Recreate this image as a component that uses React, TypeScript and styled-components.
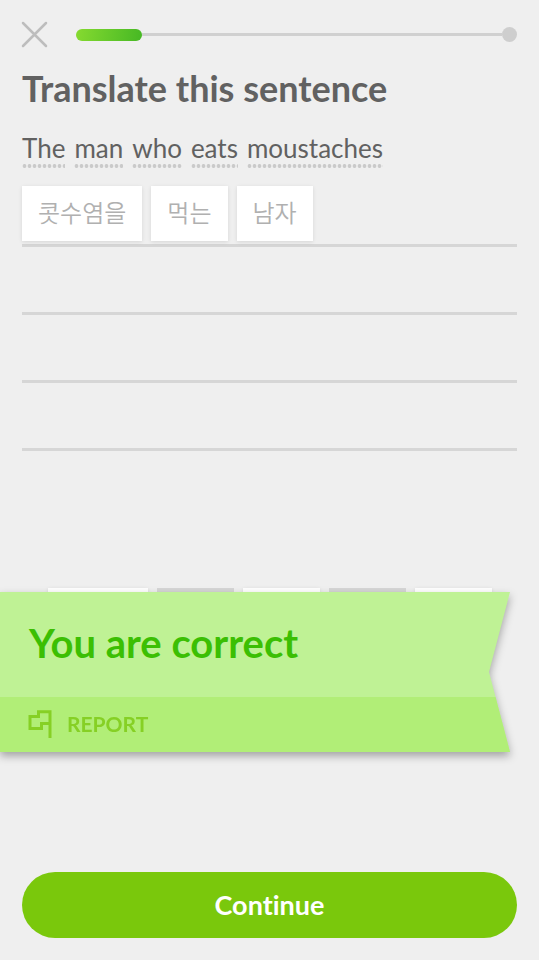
import React from "react";
import styled, { createGlobalStyle } from "styled-components";

const GlobalStyle = createGlobalStyle`
  *, *::before, *::after { box-sizing: border-box; }
  body {
    margin: 0;
    background: #efefef;
    font-family: Lato, "Noto Sans CJK KR", sans-serif;
    font-variant-ligatures: none;
    color: #616161;
  }
  button { font: inherit; font-variant-ligatures: none; border: 0; background: none; padding: 0; cursor: pointer; }
`;

const Page = styled.div`
  min-height: 100vh;
  display: flex;
  flex-direction: column;
  background: #efefef;
`;

const Header = styled.header`
  display: flex;
  align-items: center;
  gap: 28px;
  height: 69px;
  padding: 0 22px 0 21px;
`;

const CloseButton = styled.button`
  display: flex;
  width: 27px;
  height: 27px;
`;

const Progress = styled.div`
  flex: 1;
  display: flex;
  align-items: center;
`;

const ProgressDone = styled.div`
  width: 15%;
  height: 12px;
  border-radius: 6px;
  background: linear-gradient(100deg, #86da30, #46b824);
`;

const ProgressRest = styled.div`
  flex: 1;
  height: 3px;
  background: #d0d0d0;
`;

const ProgressEnd = styled.div`
  width: 15px;
  height: 15px;
  border-radius: 50%;
  background: #cecece;
`;

const Exercise = styled.main`
  flex: 1;
  display: flex;
  flex-direction: column;
`;

const Title = styled.h1`
  margin: 0;
  padding: 0 22px;
  font-size: 36px;
  line-height: 38px;
  font-weight: 700;
`;

const Sentence = styled.p`
  display: flex;
  flex-wrap: wrap;
  gap: 9px;
  margin: 0;
  padding: 24px 22px 11px;
  font-size: 26px;
  line-height: 35px;
`;

const Hint = styled.span`
  height: 37px;
  background: radial-gradient(circle at center, #cacaca 50%, transparent 68%) left bottom / 5px 4px repeat-x;
`;

const AnswerArea = styled.div`
  margin: 0 22px;
`;

const AnswerLine = styled.div`
  display: flex;
  align-items: flex-start;
  gap: 9px;
  height: 68px;
  padding-top: 7px;
  border-bottom: 3px solid #d6d6d6;
`;

const Tile = styled.button`
  height: 55px;
  padding: 0 16px 4px;
  background: #fff;
  color: #b0b0b0;
  font-family: "Noto Sans CJK KR", sans-serif;
  font-size: 24px;
  line-height: 36px;
  font-weight: 350;
  box-shadow: 0 1px 4px rgba(0, 0, 0, 0.1);
`;

const BankArea = styled.section`
  position: relative;
  margin-top: auto;
  padding-bottom: 229px;
`;

const Bank = styled.div`
  display: flex;
  justify-content: center;
  gap: 9px;
`;

const Slot = styled.div<{ $wide?: boolean; $used?: boolean }>`
  width: ${(p) => (p.$wide ? 100 : 77)}px;
  height: 55px;
  background: ${(p) => (p.$used ? "#d6d6d6" : "#fff")};
  box-shadow: ${(p) => (p.$used ? "none" : "0 1px 4px rgba(0, 0, 0, 0.1)")};
`;

const Banner = styled.div`
  position: absolute;
  top: 4px;
  left: 0;
  right: 29px;
  filter: drop-shadow(0 4px 4px rgba(0, 0, 0, 0.32));
`;

const Ribbon = styled.div`
  background: #bff295;
  clip-path: polygon(0 0, 100% 0, calc(100% - 21px) 50%, 100% 100%, 0 100%);
`;

const Verdict = styled.h2`
  margin: 0;
  padding: 27px 29px 30px;
  color: #3bbf03;
  font-size: 40px;
  line-height: 48px;
  font-weight: 700;
`;

const ReportButton = styled.button`
  display: flex;
  align-items: center;
  gap: 15px;
  width: 100%;
  height: 55px;
  padding: 0 28px 2px;
  background: #b1ee77;
  color: #86d025;
  font-size: 21px;
  line-height: 28px;
  font-weight: 700;
`;

const Footer = styled.footer`
  display: flex;
  padding: 0 22px 22px;
`;

const ContinueButton = styled.button`
  flex: 1;
  height: 66px;
  border-radius: 33px;
  background: #7ac80c;
  color: #fff;
  font-size: 27px;
  line-height: 32px;
  font-weight: 700;
`;

const words = ["The", "man", "who", "eats", "moustaches"];
const answer = ["콧수염을", "먹는", "남자"];
const bank = [
  { wide: true, used: false },
  { wide: false, used: true },
  { wide: false, used: false },
  { wide: false, used: true },
  { wide: false, used: false },
];

export default function App() {
  return (
    <>
      <GlobalStyle />
      <Page>
        <Header>
          <CloseButton aria-label="Close">
            <svg width="27" height="27" viewBox="0 0 27 27" fill="none" stroke="#bdbdbd" strokeWidth="2.5" strokeLinecap="round" aria-hidden="true">
              <path d="M2 2L25 25M25 2L2 25" />
            </svg>
          </CloseButton>
          <Progress role="progressbar" aria-label="Lesson progress" aria-valuenow={15}>
            <ProgressDone />
            <ProgressRest />
            <ProgressEnd />
          </Progress>
        </Header>
        <Exercise>
          <Title>Translate this sentence</Title>
          <Sentence>
            {words.map((word) => (
              <Hint key={word}>{word}</Hint>
            ))}
          </Sentence>
          <AnswerArea>
            <AnswerLine>
              {answer.map((word) => (
                <Tile key={word}>{word}</Tile>
              ))}
            </AnswerLine>
            <AnswerLine />
            <AnswerLine />
            <AnswerLine />
          </AnswerArea>
          <BankArea>
            <Bank>
              {bank.map((slot, i) => (
                <Slot key={i} $wide={slot.wide} $used={slot.used} />
              ))}
            </Bank>
            <Banner role="status">
              <Ribbon>
                <Verdict>You are correct</Verdict>
                <ReportButton>
                  <svg width="24" height="28" viewBox="0 0 24 28" fill="none" stroke="currentColor" strokeWidth="3" aria-hidden="true">
                    <path d="M22 28V1.8H10.5V6.5H2V18.6H13.5V13.4H22" />
                  </svg>
                  REPORT
                </ReportButton>
              </Ribbon>
            </Banner>
          </BankArea>
        </Exercise>
        <Footer>
          <ContinueButton>Continue</ContinueButton>
        </Footer>
      </Page>
    </>
  );
}
